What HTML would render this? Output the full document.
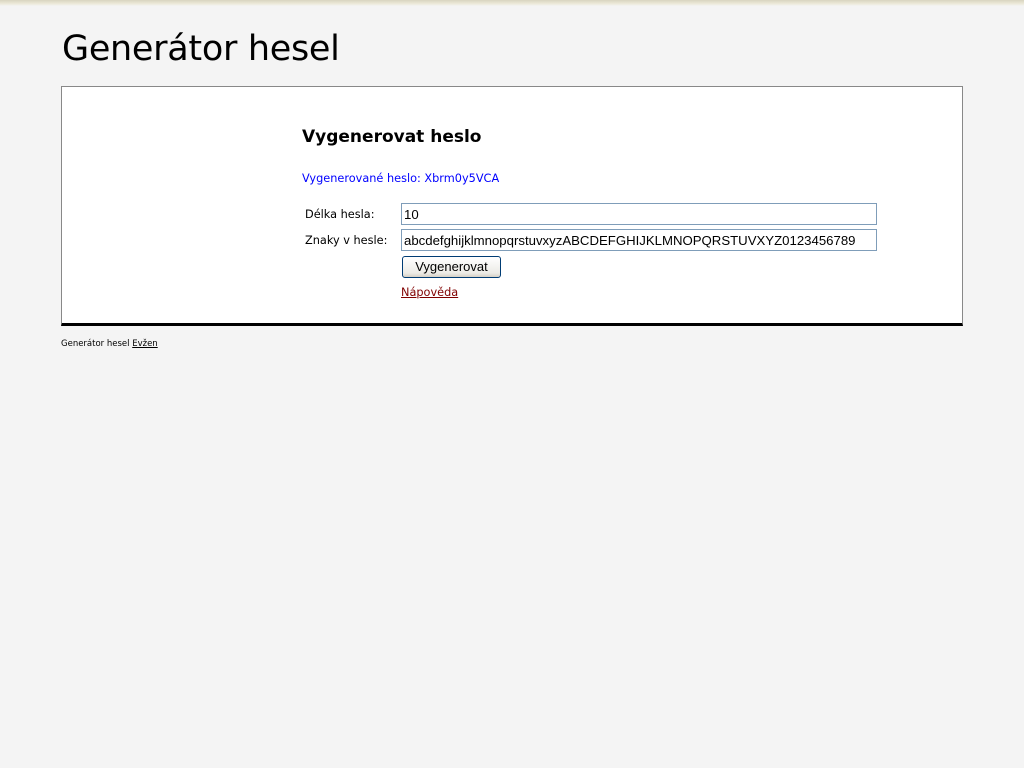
<!DOCTYPE html>
<html><head><meta charset="utf-8"><style>
*{margin:0;padding:0;box-sizing:border-box}
body{width:1024px;height:768px;background:#f4f4f4;font-family:"DejaVu Sans","Liberation Sans",sans-serif;position:relative;overflow:hidden}
.top{position:absolute;left:0;top:0;width:1024px;height:6px;background:linear-gradient(#d8d4c0,#ece9d8 60%,#f4f4f4)}
h1{position:absolute;left:62px;top:29px;font-size:35px;font-weight:normal;color:#000;letter-spacing:-0.3px}
.box{position:absolute;left:61px;top:86px;width:902px;height:240px;background:#fff;border:1px solid #888;border-bottom:3px solid #000}
h2{position:absolute;left:302px;top:127px;font-size:17px;font-weight:bold;color:#000}
.gen{position:absolute;left:302px;top:172px;font-size:11.3px;color:#0000ff}
.lbl{position:absolute;left:305px;font-size:11.3px;color:#000}
.inp{position:absolute;left:401px;width:476px;height:22px;border:1px solid #7f9db9;background:#fff;font-family:"Liberation Sans",sans-serif;font-size:13.2px;padding:3px 2px;color:#000;white-space:nowrap;overflow:hidden}
.btn{position:absolute;left:402px;top:256px;width:99px;height:22px;border:1px solid #003c74;border-radius:3px;background:linear-gradient(#fff,#ecebe6 80%,#d6d0c5);font-family:"Liberation Sans",sans-serif;font-size:13px;text-align:center;line-height:20px}
.help{position:absolute;left:401px;top:286px;font-size:11.3px;color:#800000;text-decoration:underline}
.foot{position:absolute;left:61px;top:339px;font-size:8.5px;color:#000}
.foot u{color:#000}
</style></head><body>
<div class="top"></div>
<h1>Generátor hesel</h1>
<div class="box"></div>
<h2>Vygenerovat heslo</h2>
<div class="gen">Vygenerované heslo: Xbrm0y5VCA</div>
<div class="lbl" style="top:208px">Délka hesla:</div>
<div class="inp" style="top:203px">10</div>
<div class="lbl" style="top:234px">Znaky v hesle:</div>
<div class="inp" style="top:229px">abcdefghijklmnopqrstuvxyzABCDEFGHIJKLMNOPQRSTUVXYZ0123456789</div>
<div class="btn">Vygenerovat</div>
<div class="help">Nápověda</div>
<div class="foot">Generátor hesel <u>Evžen</u></div>
</body></html>
